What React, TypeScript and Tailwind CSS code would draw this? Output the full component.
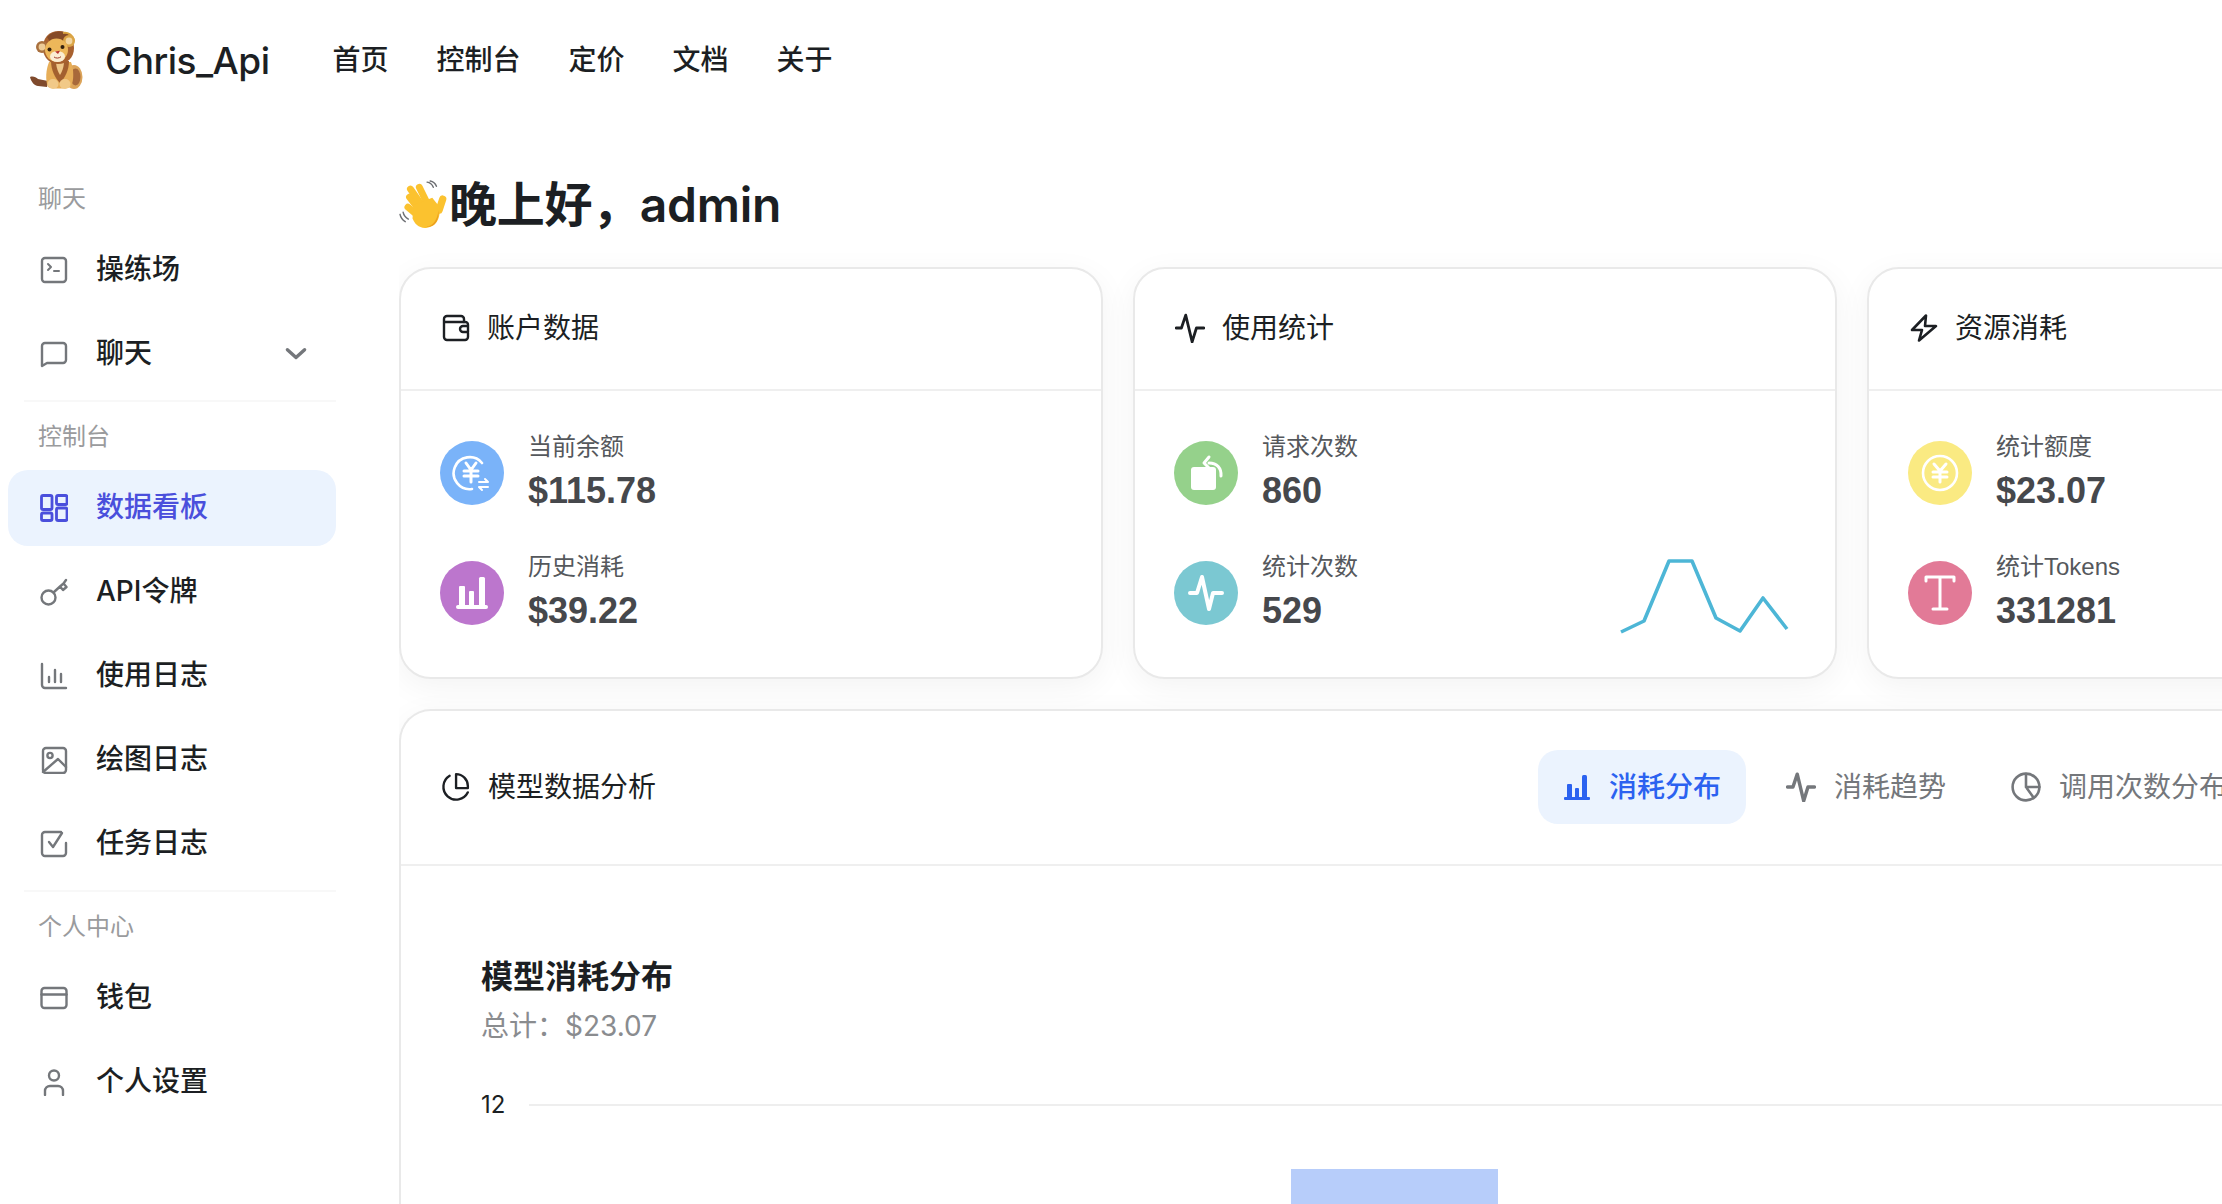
import React from "react";

const cn = "font-[Inter,'Noto_Sans_CJK_SC','Noto_Sans',sans-serif]";

type IP = { className?: string };
const Svg = ({ className, children, fill = "none", sw = 2.4 }: IP & { children: React.ReactNode; fill?: string; sw?: number }) => (
  <svg viewBox="0 0 28 28" fill={fill} stroke={fill === "none" ? "currentColor" : "none"} strokeWidth={sw} strokeLinecap="round" strokeLinejoin="round" className={className}>
    {children}
  </svg>
);

const Lion = () => (
  <svg viewBox="0 0 54 60" className="w-[54px] h-[60px] shrink-0">
    <path d="M1 47c3-1 6 0 8 2l10 2-1 6-9-1c-3 0-7-4-8-9z" fill="#7f4a2c" />
    <ellipse cx="45" cy="47" rx="8.5" ry="12" fill="#dca45a" />
    <ellipse cx="46.5" cy="47" rx="5" ry="8.5" fill="#a8693a" />
    <path d="M20 32h22c3 8 3 18 0 25-7 2-16 2-23 0-3-7-2-17 1-25z" fill="#e7ae58" />
    <path d="M22 31h18c0 9-4 17-9 22-5-5-9-13-9-22z" fill="#a3602f" />
    <path d="M27 33h8c-.5 5-2 9-4 12-2-3-3.500-7-4-12z" fill="#efc88a" />
    <ellipse cx="24" cy="54" rx="5.500" ry="5" fill="#f1c988" />
    <ellipse cx="36" cy="54" rx="5.500" ry="5" fill="#f1c988" />
    <path d="M14 20C13 8 20 1 30 1c9 0 15 7 15 17 0 10-7 16-16 16-8 0-14-6-15-14z" fill="#a8612f" />
    <path d="M18 7c5-6 16-8 23-2l-3 7H21z" fill="#864b28" />
    <path d="M34 3c5-1 10 2 11 8" fill="none" stroke="#d9a23e" strokeWidth="2" />
    <circle cx="13" cy="17" r="6" fill="#a9703e" />
    <circle cx="13" cy="17" r="3.400" fill="#eccb97" />
    <circle cx="40" cy="11" r="6" fill="#dba547" />
    <circle cx="40" cy="11" r="3.400" fill="#f3d6a2" />
    <ellipse cx="27.500" cy="20" rx="11.500" ry="11.500" fill="#edb75a" />
    <ellipse cx="28.500" cy="26.500" rx="7.500" ry="5.500" fill="#fbeed3" />
    <circle cx="20.500" cy="19.500" r="2" fill="#33200f" />
    <circle cx="33.500" cy="17" r="2" fill="#33200f" />
    <path d="M26 21.500l5-.8-2 3.200z" fill="#b8322a" />
    <path d="M25 27c2 1.500 5 1.400 7-.3" stroke="#a03a28" strokeWidth="1" fill="none" />
  </svg>
);

const Wave = () => (
  <svg viewBox="0 0 50 48" className="w-[52px] h-[50px] shrink-0 -mr-[2px]">
    <g fill="none" stroke="#6d6f73" strokeWidth="1.4" strokeLinecap="round">
      <path d="M27 2c3 .4 5 2.400 6 5M30 1c3 .6 5 2.500 6 5" />
      <path d="M1 33c.6 3 2.600 5.500 5 7M4 31c.6 3 2.600 5 5 6.500" />
    </g>
    <g fill="#fbc22f">
      <rect x="-3.200" y="0" width="6.600" height="21" rx="3.300" transform="translate(8 14) rotate(-38)" />
      <rect x="-3.200" y="0" width="6.600" height="25" rx="3.300" transform="translate(9 6) rotate(-35)" />
      <rect x="-3.200" y="0" width="6.600" height="26" rx="3.300" transform="translate(18 4) rotate(-26)" />
      <rect x="-3.200" y="0" width="6.600" height="20" rx="3.300" transform="translate(6 24) rotate(-50)" />
      <rect x="-3.400" y="0" width="7" height="18" rx="3.400" transform="translate(43 15) rotate(18)" />
      <path d="M14 24l18-7 7 9c1 9-2 19-13 20-7 .5-11-4-13-9z" />
    </g>
    <path d="M26 45c7-1 11-7 12-16 .6 9-3 17-12 16z" fill="#ec9f1e" />
  </svg>
);

const Terminal = (p: IP) => <Svg {...p}><rect x="2" y="2" width="24" height="24" rx="3" /><path d="M8 8l3 3-3 3M14 15h5" strokeWidth={2} /></Svg>;
const Chat = (p: IP) => <Svg {...p}><path d="M2 26V6a3 3 0 0 1 3-3h18a3 3 0 0 1 3 3v14a3 3 0 0 1-3 3H7z" /></Svg>;
const Chevron = (p: IP) => <Svg {...p} sw={4}><path d="M4 9l10 9 10-9" /></Svg>;
const Grid = (p: IP) => (
  <Svg {...p} sw={2.8}>
    <rect x="1.500" y="1.500" width="10.500" height="14" rx="1.600" />
    <rect x="16.500" y="1.500" width="10.500" height="9" rx="1.600" />
    <rect x="1.500" y="19" width="10.500" height="7.500" rx="1.600" />
    <rect x="16.500" y="14" width="10.500" height="12.500" rx="1.600" />
  </Svg>
);
const Key = (p: IP) => <Svg {...p}><circle cx="8.500" cy="19.500" r="7" /><path d="M13.500 14.500L20 8.500M20 8.500l3 3.500 3.500-3-3-3.500zM23.500 5.500L26 2" /></Svg>;
const Logs = (p: IP) => <Svg {...p}><path d="M2 2v21a3 3 0 0 0 3 3h21M9 15v5M15 8v12M21 12v8" /></Svg>;
const Pic = (p: IP) => <Svg {...p}><rect x="3" y="2" width="23" height="25" rx="3" /><circle cx="10" cy="9.500" r="2.600" /><path d="M3 26l15-13 8 8" /></Svg>;
const Task = (p: IP) => <Svg {...p}><path d="M26 13v10a3 3 0 0 1-3 3H5a3 3 0 0 1-3-3V5a3 3 0 0 1 3-3h16" /><path d="M9 12l4 5 9-14" /></Svg>;
const Card2 = (p: IP) => <Svg {...p}><rect x="1.500" y="4" width="25" height="20" rx="3" /><path d="M1.500 10.500h25" /></Svg>;
const User = (p: IP) => <Svg {...p}><circle cx="14" cy="7.500" r="5" /><path d="M5 27v-4a5 5 0 0 1 5-5h8a5 5 0 0 1 5 5v4" /></Svg>;

const Wallet = (p: IP) => <Svg {...p} sw={2.4}><path d="M2 8V5a3 3 0 0 1 3-3h14a3 3 0 0 1 3 3v3H2zM2 8v15a3 3 0 0 0 3 3h18a3 3 0 0 0 3-3V19" /><path d="M26 12v-1.200A2.800 2.800 0 0 0 23 8h-1M21 12h5v6h-5a3 3 0 0 1 0-6z" /></Svg>;
const Activity = (p: IP) => <Svg {...p} sw={2.6}><path d="M1 14h5l4-12 6 25 4-13h7" /></Svg>;
const ActivityBold = (p: IP) => <Svg {...p} sw={3.2}><path d="M1.500 14h5l4-12 6 25 4-13h6" /></Svg>;
const Zap = (p: IP) => <Svg {...p} sw={2.6}><path d="M16 1.500L2 16h10l-3 10.500L26 12H15z" /></Svg>;
const Pie = (p: IP) => <Svg {...p} sw={2.2}><path d="M9 3.500A12 12 0 1 0 26 19" /><path d="M15 2a11 11 0 0 1 11 11v2H15z" /></Svg>;
const Clock = (p: IP) => <Svg {...p} sw={2.4}><circle cx="14" cy="14" r="12.500" /><path d="M14 2v12h12.500M14 14l6.500 9" /></Svg>;
const Bars = (p: IP) => (
  <Svg {...p} fill="currentColor">
    <rect x="1" y="24" width="26" height="3" rx="1" />
    <rect x="4" y="11" width="5" height="14" rx="1" />
    <rect x="12" y="15" width="4" height="10" rx="1" />
    <rect x="19" y="2" width="5" height="23" rx="1.500" />
  </Svg>
);

const Circle = ({ bg, children }: { bg: string; children: React.ReactNode }) => (
  <div className={`w-16 h-16 rounded-full shrink-0 flex items-center justify-center text-white ${bg}`}>{children}</div>
);

const IcoYenSwap = () => (
  <svg viewBox="0 0 40 40" fill="none" stroke="currentColor" strokeWidth="2.600" strokeLinecap="round" strokeLinejoin="round" className="w-10 h-10">
    <path d="M30 10A16 16 0 1 0 20 36" />
    <path d="M14 10l5 7 5-7M12 18h14M12 23h14M19 17v12" strokeWidth="3" />
    <path d="M27 29h9l-3-3M36 34h-9l3 3" strokeWidth="2" />
  </svg>
);
const IcoBars = () => (
  <svg viewBox="0 0 36 36" fill="currentColor" className="w-9 h-9">
    <rect x="2" y="30" width="32" height="4" rx="2" />
    <rect x="5" y="11" width="6" height="20" rx="1" />
    <rect x="15" y="16" width="5" height="15" rx="1" />
    <rect x="25" y="2" width="6" height="29" rx="1.500" />
  </svg>
);
const IcoRotate = () => (
  <svg viewBox="0 0 36 38" fill="none" stroke="currentColor" strokeLinecap="round" strokeLinejoin="round" className="w-9 h-[38px]">
    <rect x="3" y="13" width="25" height="23" rx="3" fill="currentColor" stroke="none" />
    <path d="M33 22c.5-8-4-13-12-13M21 3l-5 6 5 5" strokeWidth="3" />
  </svg>
);
const IcoPulse = () => (
  <svg viewBox="0 0 38 38" fill="none" stroke="currentColor" strokeWidth="4" strokeLinecap="round" strokeLinejoin="round" className="w-[38px] h-[38px]">
    <path d="M3 19h7l5-16 7 32 4-16h9" />
  </svg>
);
const IcoCoin = () => (
  <svg viewBox="0 0 38 38" fill="none" stroke="currentColor" strokeLinecap="round" strokeLinejoin="round" className="w-[38px] h-[38px]">
    <circle cx="19" cy="19" r="17" strokeWidth="2.600" />
    <path d="M13 10l6 7 6-7M12 18h14M12 23h14M19 17v11" strokeWidth="3" />
  </svg>
);
const IcoT = () => (
  <svg viewBox="0 0 34 38" fill="none" stroke="currentColor" strokeWidth="3" strokeLinecap="round" strokeLinejoin="round" className="w-[34px] h-[38px]">
    <path d="M3 7V3h28v4M17 3v32M10 35h14" />
  </svg>
);

const Item = ({ icon: I, label, active, extra }: { icon: (p: IP) => React.ReactElement; label: string; active?: boolean; extra?: React.ReactNode }) => (
  <div className={`h-[76px] mb-2 rounded-[20px] flex items-center pl-[32px] pr-[24px] ${active ? "bg-[#ebf3fe]" : ""}`}>
    <I className={`w-7 h-7 mr-[28px] shrink-0 ${active ? "text-[#4a4fdc]" : "text-[#74777b]"}`} />
    <span className={`-translate-y-px text-[28px] leading-none font-medium ${active ? "text-[#4a4fdc]" : "text-[#1c1f23]"}`}>{label}</span>
    {extra}
  </div>
);

const Label = ({ children }: { children: React.ReactNode }) => (
  <div className="h-9 leading-[38px] mb-4 pl-[30px] text-[24px] text-[#9a9b9d]">{children}</div>
);

const Stat = ({ bg, icon, label, value }: { bg: string; icon: React.ReactNode; label: string; value: string }) => (
  <div className="flex items-center gap-6 h-[86px]">
    <Circle bg={bg}>{icon}</Circle>
    <div className="-translate-y-px">
      <div className="text-[24px] leading-[33px] text-[#55585c] font-['Liberation_Sans','Noto_Sans_CJK_SC',sans-serif]">{label}</div>
      <div className="translate-y-[2px] text-[36px] leading-[52px] font-bold text-[#46484c] font-['Liberation_Sans',sans-serif]">{value}</div>
    </div>
  </div>
);

const Panel = ({ icon, title, children }: { icon: React.ReactNode; title: string; children: React.ReactNode }) => (
  <section className="w-[704px] h-[412px] shrink-0 bg-white rounded-[32px] border-2 border-[#e9e9e9] shadow-[0_8px_32px_rgba(0,0,0,0.05)] overflow-hidden">
    <div className="h-[124px] border-b-2 border-[#efefef] pl-[41px] -mt-[2px] flex items-center gap-[17px] text-[#1c1f23]">
      {icon}
      <span className="text-[28px] leading-none">{title}</span>
    </div>
    <div className="relative px-[39px] pt-[39px] flex flex-col gap-[34px]">{children}</div>
  </section>
);

const Tab = ({ icon, label, active }: { icon: React.ReactNode; label: string; active?: boolean }) => (
  <div className={`h-[74px] px-[25px] rounded-[20px] flex items-center gap-[18px] shrink-0 ${active ? "bg-[#ebf3fe] text-[#2b62f0]" : "text-[#74777b]"}`}>
    {icon}
    <span className={`text-[28px] leading-none ${active ? "font-medium" : ""}`}>{label}</span>
  </div>
);

export default function App() {
  return (
    <div className={`${cn} w-[2222px] h-[1204px] overflow-hidden bg-white text-[#1c1f23] flex flex-col`}>
      <header className="h-[120px] shrink-0 flex items-center pl-[29px]">
        <Lion />
        <span className="ml-[22px] text-[37px] leading-none font-medium tracking-[-0.5px]">Chris_Api</span>
        <nav className="ml-[63px] flex gap-[48px] text-[28px] font-medium">
          <span>首页</span><span>控制台</span><span>定价</span><span>文档</span><span>关于</span>
        </nav>
      </header>
      <div className="flex flex-1 min-h-0">
        <aside className="w-[399px] shrink-0 pt-[60px] pl-2">
          <div className="w-[328px]">
            <Label>聊天</Label>
            <Item icon={Terminal} label="操练场" />
            <Item icon={Chat} label="聊天" extra={<Chevron className="ml-auto w-[24px] h-[24px] text-[#74777b] mr-[4px]" />} />
            <div className="h-[2px] bg-[#f8f8f8] ml-4 mb-4" />
            <Label>控制台</Label>
            <Item icon={Grid} label="数据看板" active />
            <Item icon={Key} label="API令牌" />
            <Item icon={Logs} label="使用日志" />
            <Item icon={Pic} label="绘图日志" />
            <Item icon={Task} label="任务日志" />
            <div className="h-[2px] bg-[#f8f8f8] ml-4 mb-4" />
            <Label>个人中心</Label>
            <Item icon={Card2} label="钱包" />
            <Item icon={User} label="个人设置" />
          </div>
        </aside>
        <main className="flex-1 min-w-0 overflow-hidden pt-[53px]">
          <h1 className="flex items-center h-16 mb-[30px] text-[48px] font-semibold leading-none tracking-[-0.3px]">
            <Wave />
            <span>晚上好，admin</span>
          </h1>
          <div className="flex gap-[30px] mb-[30px]">
            <Panel icon={<Wallet className="w-7 h-7" />} title="账户数据">
              <Stat bg="bg-[#7ab3f9]" icon={<IcoYenSwap />} label="当前余额" value="$115.78" />
              <Stat bg="bg-[#bc76cd]" icon={<IcoBars />} label="历史消耗" value="$39.22" />
            </Panel>
            <Panel icon={<Activity className="w-[30px] h-[30px] -ml-px" />} title="使用统计">
              <Stat bg="bg-[#95d18b]" icon={<IcoRotate />} label="请求次数" value="860" />
              <Stat bg="bg-[#7bc8d2]" icon={<IcoPulse />} label="统计次数" value="529" />
              <svg viewBox="0 0 170 76" fill="none" className="absolute right-[46px] bottom-[2px] w-[170px] h-[76px]">
                <polyline points="2,74 25,63 50,3 73,3 97,60 121,73 144,40 168,71" stroke="#4db6d6" strokeWidth="3.600" strokeLinejoin="round" />
              </svg>
            </Panel>
            <Panel icon={<Zap className="w-[28px] h-[28px]" />} title="资源消耗">
              <Stat bg="bg-[#faea82]" icon={<IcoCoin />} label="统计额度" value="$23.07" />
              <Stat bg="bg-[#e27a97]" icon={<IcoT />} label="统计Tokens" value="331281" />
            </Panel>
          </div>
          <section className="w-[2200px] bg-white rounded-t-[32px] border-2 border-b-0 border-[#e9e9e9] shadow-[0_8px_32px_rgba(0,0,0,0.05)]">
            <div className="h-[157px] -mt-[2px] border-b-2 border-[#efefef] flex items-center justify-between pl-[39px]">
              <div className="flex items-center gap-[18px]">
                <Pie className="w-[30px] h-[30px]" />
                <span className="text-[28px] leading-none">模型数据分析</span>
              </div>
              <div className="flex gap-[15px] ml-auto mr-[-3px] w-[1062px] overflow-hidden">
                <Tab active icon={<Bars className="w-7 h-7" />} label="消耗分布" />
                <Tab icon={<ActivityBold className="w-[30px] h-[30px]" />} label="消耗趋势" />
                <Tab icon={<Clock className="w-[30px] h-[30px]" />} label="调用次数分布" />
              </div>
            </div>
            <div className="pl-[80px] pt-[89px]">
              <div className="text-[32px] leading-[44px] font-semibold">模型消耗分布</div>
              <div className="mt-[7px] text-[28px] leading-[40px] text-[#8a8c8f]">总计：$23.07</div>
              <div className="mt-[39px] flex items-center gap-[24px]">
                <span className="text-[24px] leading-[40px]">12</span>
                <div className="flex-1 h-[2px] bg-[#eeeeee]" />
              </div>
              <div className="ml-[810px] mt-[44px] w-[207px] h-[60px] bg-[#b7cdfa]" />
            </div>
          </section>
        </main>
      </div>
    </div>
  );
}
